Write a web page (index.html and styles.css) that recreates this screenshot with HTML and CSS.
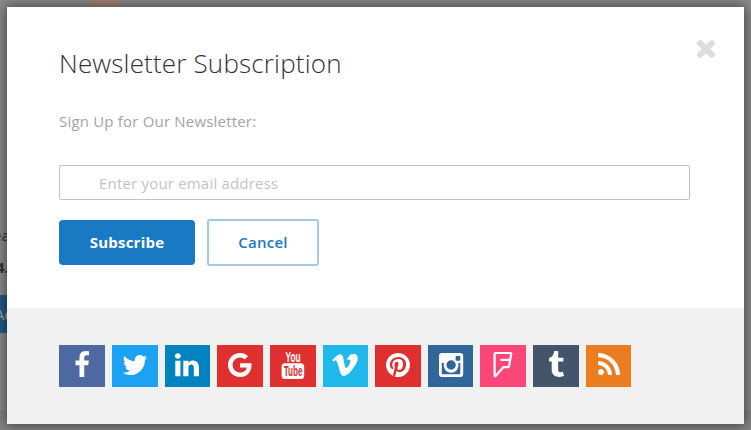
FILE: index.html
```
<!DOCTYPE html>
<html lang="en">
<head>
<meta charset="utf-8">
<title>Newsletter Subscription</title>
<link rel="stylesheet" href="styles.css">
</head>
<body>
<div class="backdrop">
  <div class="backdrop-photo"></div>
  <span class="backdrop-name">ea</span>
  <span class="backdrop-price">4.</span>
  <span class="backdrop-button">Ad</span>
  <div class="backdrop-footer"></div>
</div>
<main class="modal">
  <button class="close" aria-label="Close"><svg viewBox="0 0 1792 1792"><path d="M1490 1322q0 40-28 68l-136 136q-28 28-68 28t-68-28l-294-294-294 294q-28 28-68 28t-68-28l-136-136q-28-28-28-68t28-68l294-294-294-294q-28-28-28-68t28-68l136-136q28-28 68-28t68 28l294 294 294-294q28-28 68-28t68 28l136 136q28 28 28 68t-28 68l-294 294 294 294q28 28 28 68z"/></svg></button>
  <section class="content">
    <h1>Newsletter Subscription</h1>
    <label for="email">Sign Up for Our Newsletter:</label>
    <input id="email" type="email" placeholder="Enter your email address">
    <div class="actions">
      <button class="btn primary">Subscribe</button>
      <button class="btn secondary">Cancel</button>
    </div>
  </section>
  <footer class="social">
    <a class="facebook"><svg viewBox="0 0 1792 1792"><path d="M1343 12v264h-157q-86 0-116 36t-30 108v189h293l-39 296h-254v759h-306v-759h-255v-296h255v-218q0-186 104-288.500t277-102.500q147 0 228 12z"/></svg></a>
    <a class="twitter"><svg viewBox="0 0 1792 1792"><path d="M1684 408q-67 98-162 167 1 14 1 42 0 130-38 259.500t-115.500 248.500-184.500 210.500-258 146-323 54.500q-271 0-496-145 35 4 78 4 225 0 401-138-105-2-188-64.500t-114-159.500q33 5 61 5 43 0 85-11-112-23-185.500-111.500t-73.500-205.500v-4q68 38 146 41-66-44-105-115t-39-154q0-88 44-163 121 149 294.500 238.500t371.500 99.500q-8-38-8-74 0-134 94.500-228.500t228.500-94.500q140 0 236 102 109-21 205-78-37 115-142 178 93-10 186-50z"/></svg></a>
    <a class="linkedin"><svg viewBox="0 0 1792 1792"><path d="M477 625v991h-330v-991h330zm21-306q1 73-50.500 122t-135.500 49h-2q-82 0-132-49t-50-122q0-74 51.500-122.500t134.500-48.500 133 48.500 51 122.500zm1166 729v568h-329v-530q0-105-40.500-164.500t-126.500-59.500q-63 0-105.500 34.500t-64.500 85.500q-11 30-11 81v553h-329q2-399 2-647t-1-296l-1-48h329v144h-2q20-32 41-56t56.500-52 87-43.500 114.500-15.500q171 0 275 113.500t104 332.500z"/></svg></a>
    <a class="google"><svg viewBox="0 0 1792 1792"><path d="M896 786h725q12 67 12 128 0 217-91 387.500t-259.500 266.500-386.500 96q-157 0-299-60.500t-245-163.500-163.500-245-60.500-299 60.500-299 163.500-245 245-163.500 299-60.500q300 0 515 201l-209 201q-123-119-306-119-129 0-238.500 65t-173.500 176.500-64 243.500 64 243.500 173.500 176.500 238.500 65q87 0 160-24t120-60 82-82 51.500-87 22.500-78h-436v-264z"/></svg></a>
    <a class="youtube"><svg viewBox="0 0 28 28"><rect x="2.600" y="12.300" width="22.600" height="15.600" rx="3.500"/><text class="you" x="6.500" y="10.700" textLength="15" lengthAdjust="spacingAndGlyphs">You</text><text class="tube" x="4.700" y="25" textLength="18.800" lengthAdjust="spacingAndGlyphs">Tube</text></svg></a>
    <a class="vimeo"><svg viewBox="0 0 1792 1792"><path d="M1709 518q-10 236-332 651-333 431-562 431-142 0-240-263-44-160-132-482-72-262-157-262-18 0-127 76l-77-98q24-21 108-96.500t130-115.500q156-138 241-146 95-9 153 55.500t81 203.500q44 287 66 373 55 249 120 249 51 0 154-161 101-161 109-246 13-139-109-139-57 0-121 26 120-393 459-382 251 8 236 326z"/></svg></a>
    <a class="pinterest"><svg viewBox="0 0 1792 1792"><path d="M1664 896q0 209-103 385.500t-279.500 279.500-385.500 103q-111 0-218-32 59-93 78-164 9-34 54-211 20 39 73 67.500t114 28.500q121 0 216-68.500t147-188.500 52-270q0-114-59.500-214t-172.500-163-255-63q-105 0-196 29t-154.500 77-109 110.500-67 129.500-21.500 134q0 104 40 183t117 111q30 12 38-20 2-7 8-31t8-30q6-23-11-43-51-61-51-151 0-151 104.500-259.500t273.500-108.500q151 0 235.500 82t84.500 213q0 170-68.500 289t-175.500 119q-61 0-98-43.500t-23-104.500q8-35 26.500-93.500t30-103 11.500-75.500q0-50-27-83t-77-33q-62 0-105 57t-43 142q0 73 25 122l-99 418q-17 70-13 177-206-91-333-281t-127-423q0-209 103-385.500t279.500-279.500 385.500-103 385.500 103 279.500 279.500 103 385.500z"/></svg></a>
    <a class="instagram"><svg viewBox="0 0 28 28"><path fill-rule="evenodd" d="M5 2h18.200a3 3 0 0 1 3 3v18a3 3 0 0 1-3 3H5a3 3 0 0 1-3-3V5a3 3 0 0 1 3-3zM4.800 12.100v10.100q0 1 1 1h16.500q1 0 1-1V12.100h-2a7.500 7.500 0 1 1-14.400 0zM19.600 5.100q-1 0-1 1v2.600q0 1 1 1h2.700q1 0 1-1V6.100q0-1-1-1zM14.100 9.300a4.700 4.700 0 1 0 0 9.400a4.700 4.700 0 0 0 0-9.400z"/></svg></a>
    <a class="foursquare"><svg viewBox="0 0 28 28"><path class="outline" d="M6.800 2H21.300q1.100 0 .9 1.200L20 15.200q-.2 1-1.300 1H14.300L6.800 24.800q-1.200 1-1.200-.6V3.200q0-1.200 1.200-1.200zM20.200 8.900H12.300"/></svg></a>
    <a class="tumblr"><svg viewBox="0 0 1792 1792"><path d="M1328 1329l80 237q-23 35-111 66t-177 32q-104 2-190.500-26t-142.500-74-95-106-55.500-120-16.500-118v-544h-168v-215q72-26 129-69.500t91-90 58-102 34-99 15-88.500q1-5 4.500-8.500t7.500-3.500h244v424h333v252h-334v518q0 30 6.500 56t22.500 52.500 49.500 41.500 81.500 14q78-2 134-29z"/></svg></a>
    <a class="rss"><svg viewBox="0 0 1792 1792"><path d="M576 1344q0 80-56 136t-136 56-136-56-56-136 56-136 136-56 136 56 56 136zm512 123q2 28-17 48-18 21-47 21h-135q-25 0-43-16.500t-20-41.500q-22-229-184.500-391.500t-391.500-184.500q-25-2-41.500-20t-16.500-43v-135q0-29 21-47 17-17 43-17h5q160 13 306 80.500t259 181.500q114 113 181.500 259t80.500 306zm512 2q2 27-18 47-18 20-46 20h-143q-26 0-44.500-17.500t-19.500-42.500q-12-215-101-408.500t-231.500-336-336-231.500-408.500-102q-25-1-42.500-19.500t-17.500-43.500v-143q0-28 20-46 18-18 44-18h3q262 13 501.500 120t425.500 294q187 186 294 425.500t120 501.500z"/></svg></a>
  </footer>
</main>
</body>
</html>
```
FILE: styles.css
```
* { box-sizing: border-box; }
body {
  margin: 0;
  width: 751px;
  height: 430px;
  overflow: hidden;
  background: #8c8c8c;
  font-family: "Open Sans", sans-serif;
  font-size: 15px;
}
/* Page showing through behind the dialog */
.backdrop { position: absolute; inset: 0; overflow: hidden; color: #333; }
.backdrop > * { position: absolute; }
.backdrop-photo { left: 91px; top: -14px; width: 29px; height: 24px; border-radius: 10px; background: #a98578; }
.backdrop-name { left: -7px; top: 225px; }
.backdrop-price { left: -4px; top: 257px; font-weight: 700; }
.backdrop-button { left: -20px; top: 295px; width: 60px; height: 38px; padding-left: 15px; line-height: 38px; background: #245b88; color: #aaa; }
.backdrop-footer { left: 0; right: 0; top: 410px; height: 20px; background: #858585; }
.modal {
  position: relative;
  width: 737px;
  height: 417px;
  margin: 7px;
  background: #fff;
  box-shadow: 0 0 12px 1px rgba(0, 0, 0, .55);
}
.close { position: absolute; right: 24.500px; top: 27px; width: 28px; height: 28px; padding: 0; border: 0; background: none; }
.close svg { display: block; width: 28px; height: 28px; fill: #ddd; }
.content { height: 301px; padding: 37px 54px 0 52px; }
h1 { margin: 0; font-size: 26px; line-height: 38px; font-weight: 300; letter-spacing: .17px; color: #333; }
label { display: block; margin-top: 28px; line-height: 22px; letter-spacing: .19px; color: #a3a3a3; }
input {
  display: block;
  width: 631px;
  height: 35px;
  margin-top: 33px;
  padding: 0 39px;
  border: 1px solid #c2c2c2;
  border-radius: 2px;
  font: inherit;
  letter-spacing: .19px;
}
input::placeholder { color: #c3c3c3; }
.actions { display: flex; align-items: center; gap: 12px; margin-top: 19px; }
.btn { padding: 0 0 2px; border: 0; border-radius: 4px; font: 700 15px "Open Sans", sans-serif; letter-spacing: .22px; }
.primary { width: 136px; height: 45px; background: #1979c3; color: #fff; }
.secondary { width: 112px; height: 47px; border: 2px solid #a3c9e7; border-radius: 3px; background: #fff; color: #1979c3; font-weight: 600; }
.social { display: flex; gap: 6.955px; height: 116px; padding: 37px 0 0 52.320px; background: #f1f1f1; }
.social a { display: flex; flex: none; width: 45.700px; height: 42px; padding-top: 6px; justify-content: center; }
.social svg { width: 28px; height: 28px; fill: #fff; overflow: visible; }
.facebook { background: #4e68a1; }
.twitter { background: #1da1f2; }
.linkedin { background: #0083be; }
.google, .youtube, .pinterest { background: #e02f2f; }
.vimeo { background: #20b9eb; }
.instagram { background: #306699; }
.foursquare { background: #fa4778; }
.tumblr { background: #44546b; }
.rss { background: #eb7c1f; }
.social .outline { fill: none; stroke: #fff; stroke-width: 2.200; stroke-linejoin: round; stroke-linecap: round; }
.you, .tube { font: 700 14.500px "Liberation Sans", sans-serif; }
.tube { fill: #e02f2f; font-size: 14px; }
```
